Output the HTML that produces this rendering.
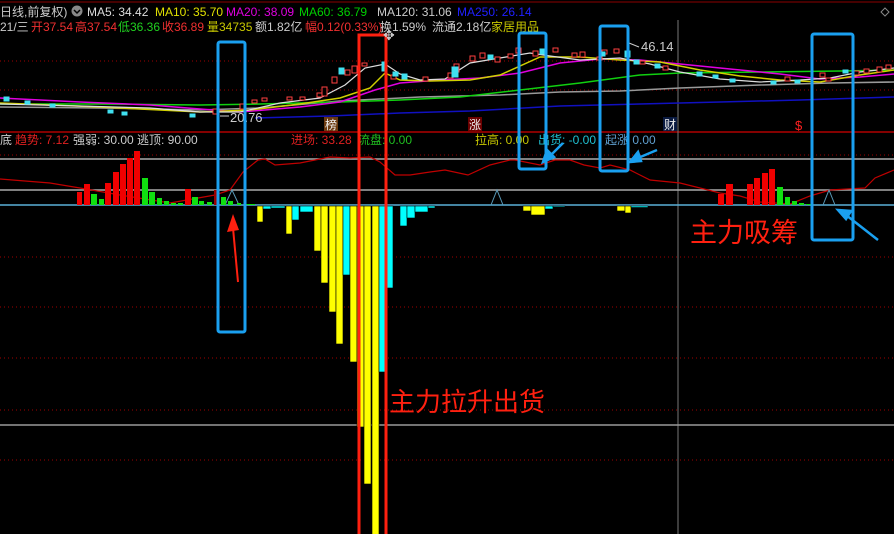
<!DOCTYPE html>
<html><head><meta charset="utf-8"><style>
html,body{margin:0;padding:0;background:#000;width:894px;height:534px;overflow:hidden}
svg{display:block}
text{font-family:"Liberation Sans","Noto Sans CJK SC",sans-serif;font-size:12px}
</style></head><body>
<svg width="894" height="534" viewBox="0 0 894 534">
<rect width="894" height="534" fill="#000"/>
<line x1="0" y1="2" x2="894" y2="2" stroke="#8b0000" stroke-width="1"/>
<g stroke="#a00000" stroke-dasharray="1,3" stroke-width="1">
<line x1="0" y1="61" x2="894" y2="61"/><line x1="0" y1="90" x2="894" y2="90"/>
<line x1="0" y1="155" x2="894" y2="155"/><line x1="0" y1="257" x2="894" y2="257"/>
<line x1="0" y1="307" x2="894" y2="307"/><line x1="0" y1="358" x2="894" y2="358"/>
<line x1="0" y1="410" x2="894" y2="410"/><line x1="0" y1="460" x2="894" y2="460"/>
</g>
<line x1="0" y1="132" x2="894" y2="132" stroke="#b00000" stroke-width="1.5"/>
<line x1="678" y1="20" x2="678" y2="534" stroke="#777" stroke-width="1"/>
<line x1="0" y1="159" x2="894" y2="159" stroke="#aaa" stroke-width="1.5"/>
<line x1="0" y1="190" x2="894" y2="190" stroke="#aaa" stroke-width="1.5"/>
<line x1="0" y1="425" x2="894" y2="425" stroke="#999" stroke-width="1.5"/>
<line x1="0" y1="205" x2="894" y2="205" stroke="#5ab0d8" stroke-width="1.5"/>

<g style="font-size:12px">
<text x="-4" y="16" fill="#ccc">(日线,前复权)</text>
<text x="87" y="16" fill="#ddd">MA5: 34.42</text>
<text x="155" y="16" fill="#e0e000">MA10: 35.70</text>
<text x="226" y="16" fill="#e000e0">MA20: 38.09</text>
<text x="299" y="16" fill="#00d000">MA60: 36.79</text>
<text x="377" y="16" fill="#ccc">MA120: 31.06</text>
<text x="457" y="16" fill="#2020ff">MA250: 26.14</text>
<text x="0" y="31" fill="#ccc">21/三</text>
<text x="31" y="31" fill="#f03030">开37.54</text>
<text x="75" y="31" fill="#f03030">高37.54</text>
<text x="118" y="31" fill="#20d020">低36.36</text>
<text x="162" y="31" fill="#f03030">收36.89</text>
<text x="207" y="31" fill="#c8c800">量34735</text>
<text x="255" y="31" fill="#ccc">额1.82亿</text>
<text x="305" y="31" fill="#f03030">幅0.12(0.33%)</text>
<text x="380" y="31" fill="#ccc">换1.59%</text>
<text x="432" y="31" fill="#ccc">流通2.18亿</text>
<text x="491" y="31" fill="#c8c800">家居用品</text>
</g>
<circle cx="77" cy="11" r="5.5" fill="#888"/><path d="M74 10 L77 13 L80 10" stroke="#000" stroke-width="1.5" fill="none"/>
<path d="M885 8 L889 12 L885 16 L881 12Z" stroke="#888" fill="none"/>

<polyline fill="none" stroke="#1010c0" stroke-width="1.5" points="255,118 330,116 400,113 470,111 560,106 640,104 720,102 800,100 894,97"/>
<polyline fill="none" stroke="#999" stroke-width="1.5" points="0,107 100,108 200,110 260,108 340,101 420,97 500,95 560,92 620,91 680,88 760,85 830,83 894,82"/>
<polyline fill="none" stroke="#10d010" stroke-width="1.5" points="0,104 100,104 200,105 260,104 340,102 400,100 460,97 520,90 580,83 640,75 680,73 760,72 840,71 894,70"/>
<polyline fill="none" stroke="#e000e0" stroke-width="1.5" points="0,98 80,102 150,105 200,109 240,112 300,107 340,102 375,90 400,83 440,80 480,78 520,73 560,63 600,59 640,60 680,64 730,69 780,74 820,79 860,77 894,74"/>
<polyline fill="none" stroke="#d0d000" stroke-width="1.5" points="0,103 100,107 200,112 250,110 300,104 340,98 370,88 385,73 400,80 430,81 470,80 500,75 540,57 580,57 620,60 660,62 700,70 740,76 780,80 820,82 860,75 894,70"/>
<polyline fill="none" stroke="#ddd" stroke-width="1.2" points="0,104 80,106 150,108 200,112 240,112 280,103 320,98 345,85 365,68 385,64 400,74 420,80 445,79 470,63 500,58 530,53 550,56 580,60 620,58 650,64 680,72 720,79 760,82 800,80 830,78 860,72 894,68"/>
<g stroke-width="1">
<g fill="#000" stroke="#ff4040">
<rect x="213" y="109" width="5" height="5"/><rect x="240" y="104" width="5" height="5"/><rect x="252" y="100" width="5" height="3"/><rect x="262" y="98" width="5" height="3"/>
<rect x="287" y="97" width="5" height="3"/><rect x="300" y="97" width="5" height="3"/><rect x="317" y="93" width="5" height="4"/><rect x="322" y="87" width="5" height="9"/>
<rect x="332" y="77" width="5" height="6"/><rect x="345" y="70" width="5" height="5"/><rect x="352" y="66" width="5" height="7"/><rect x="362" y="63" width="5" height="3"/>
<rect x="391" y="75" width="5" height="4"/><rect x="423" y="77" width="5" height="4"/><rect x="448" y="73" width="5" height="5"/><rect x="454" y="64" width="5" height="8"/>
<rect x="470" y="56" width="5" height="5"/><rect x="480" y="53" width="5" height="5"/><rect x="495" y="57" width="5" height="5"/><rect x="508" y="54" width="5" height="4"/>
<rect x="516" y="48" width="5" height="5"/><rect x="533" y="51" width="5" height="5"/><rect x="553" y="48" width="5" height="4"/><rect x="572" y="53" width="5" height="4"/>
<rect x="580" y="52" width="5" height="5"/><rect x="597" y="57" width="5" height="3"/><rect x="602" y="50" width="5" height="4"/><rect x="614" y="49" width="5" height="4"/>
<rect x="640" y="61" width="5" height="3"/><rect x="663" y="66" width="5" height="4"/><rect x="785" y="77" width="5" height="4"/><rect x="820" y="73" width="5" height="4"/>
<rect x="826" y="78" width="5" height="3"/><rect x="854" y="71" width="5" height="4"/><rect x="864" y="69" width="5" height="4"/><rect x="877" y="67" width="5" height="5"/><rect x="886" y="65" width="5" height="4"/>
</g>
<g fill="#40e0f0" stroke="#40e0f0">
<rect x="4" y="97" width="5" height="4"/><rect x="25" y="101" width="5" height="3"/><rect x="50" y="104" width="5" height="3"/><rect x="108" y="110" width="5" height="3"/>
<rect x="122" y="112" width="5" height="3"/><rect x="190" y="114" width="5" height="3"/><rect x="339" y="68" width="5" height="6"/><rect x="382" y="62" width="5" height="9"/>
<rect x="393" y="72" width="5" height="4"/><rect x="402" y="74" width="5" height="5"/>
<rect x="452" y="67" width="6" height="10"/><rect x="488" y="55" width="5" height="4"/><rect x="540" y="49" width="5" height="5"/>
<rect x="600" y="52" width="5" height="4"/><rect x="625" y="51" width="5" height="6"/><rect x="634" y="60" width="5" height="4"/><rect x="655" y="64" width="5" height="4"/>
<rect x="697" y="72" width="5" height="4"/><rect x="713" y="75" width="5" height="3"/><rect x="730" y="79" width="5" height="3"/><rect x="771" y="81" width="5" height="3"/>
<rect x="795" y="80" width="5" height="3"/><rect x="843" y="70" width="5" height="3"/>
</g>
</g>
<text x="230" y="122" fill="#ccc" style="font-size:13px">20.76</text>
<line x1="220" y1="116" x2="229" y2="116" stroke="#ccc"/>
<text x="641" y="51" fill="#ccc" style="font-size:13px">46.14</text>
<line x1="629" y1="43" x2="639" y2="47" stroke="#ccc"/>
<rect x="324" y="117" width="14" height="14" fill="#6b3a10"/><text x="325" y="129" fill="#eee">榜</text>
<rect x="468" y="117" width="14" height="14" fill="#6a0000"/><text x="469" y="129" fill="#eee">涨</text>
<rect x="663" y="117" width="14" height="14" fill="#0a1a40"/><text x="664" y="129" fill="#eee">财</text>
<text x="795" y="130" fill="#ff2020" style="font-size:13px">$</text>

<g style="font-size:12px">
<text x="0" y="144" fill="#ccc">底</text>
<text x="15" y="144" fill="#e02020">趋势: 7.12</text>
<text x="73" y="144" fill="#ccc">强弱: 30.00</text>
<text x="137" y="144" fill="#ccc">逃顶: 90.00</text>
<text x="291" y="144" fill="#e02020">进场: 33.28</text>
<text x="358" y="144" fill="#20c020">流盘: 0.00</text>
<text x="475" y="144" fill="#c8c800">拉高: 0.00</text>
<text x="538" y="144" fill="#20c0d0">出货: -0.00</text>
<text x="605" y="144" fill="#60a0d0">起涨 0.00</text>
</g>

<polyline fill="none" stroke="#c00000" stroke-width="1.2" points="0,179 50,183 80,188 120,195 170,203 215,195 230,190 243,172 258,160 265,159 275,165 300,163 330,157 350,158 370,157 380,162 395,175 410,175 430,172 445,170 468,175 490,165 510,160 515,160 540,165 555,160 570,160 584,165 600,168 610,165 630,170 650,180 680,183 720,193 740,196 760,202 790,204 810,196 830,190 865,188 875,178 894,170"/>
<g fill="none" stroke="#5a9ab8"><path d="M225 205 L232 190 L239 205"/><path d="M491 205 L497 190 L503 205"/><path d="M823 205 L829 190 L835 205"/></g>
<g fill="#f00000">
<rect x="77" y="192" width="5" height="13"/><rect x="84" y="184" width="6" height="21"/><rect x="105" y="183" width="6" height="22"/><rect x="113" y="172" width="6" height="33"/>
<rect x="120" y="164" width="6" height="41"/><rect x="127" y="158" width="6" height="47"/><rect x="134" y="151" width="6" height="54"/><rect x="185" y="189" width="6" height="16"/>
<rect x="214" y="190" width="4" height="15" fill="#900"/>
<rect x="718" y="194" width="6" height="11"/><rect x="726" y="184" width="7" height="21"/><rect x="747" y="184" width="6" height="21"/><rect x="754" y="178" width="6" height="27"/>
<rect x="762" y="173" width="6" height="32"/><rect x="769" y="169" width="6" height="36"/>
</g>
<g fill="#10e010">
<rect x="91" y="194" width="6" height="11"/><rect x="99" y="199" width="5" height="6"/><rect x="142" y="178" width="6" height="27"/><rect x="149" y="192" width="6" height="13"/>
<rect x="157" y="198" width="5" height="7"/><rect x="164" y="201" width="5" height="4"/><rect x="171" y="203" width="5" height="2"/><rect x="178" y="203" width="5" height="2"/>
<rect x="192" y="197" width="6" height="8"/><rect x="199" y="201" width="5" height="4"/><rect x="207" y="202" width="5" height="3"/><rect x="221" y="197" width="5" height="8"/>
<rect x="228" y="201" width="5" height="4"/><rect x="237" y="203" width="4" height="2"/><rect x="244" y="204" width="11" height="1"/>
<rect x="777" y="187" width="6" height="18"/><rect x="785" y="197" width="5" height="8"/><rect x="792" y="201" width="5" height="4"/><rect x="799" y="203" width="5" height="2"/><rect x="806" y="204" width="7" height="1"/>
</g>
<g stroke="#000" stroke-width="0.6">
<rect x="257" y="206" width="6" height="16" fill="#ffff00"/><rect x="263" y="206" width="8" height="3" fill="#00ffff"/><rect x="271" y="206" width="14" height="2" fill="#00ffff"/>
<rect x="286" y="206" width="6" height="28" fill="#ffff00"/><rect x="292" y="206" width="7" height="14" fill="#00ffff"/><rect x="300" y="206" width="13" height="6" fill="#00ffff"/>
<rect x="314" y="206" width="7" height="45" fill="#ffff00"/><rect x="321" y="206" width="7" height="77" fill="#ffff00"/><rect x="329" y="206" width="7" height="106" fill="#ffff00"/>
<rect x="336" y="206" width="7" height="138" fill="#ffff00"/><rect x="343" y="206" width="7" height="69" fill="#00ffff"/><rect x="350" y="206" width="7" height="156" fill="#ffff00"/>
<rect x="357" y="206" width="7" height="221" fill="#ffff00"/><rect x="364" y="206" width="7" height="278" fill="#ffff00"/><rect x="372" y="206" width="7" height="330" fill="#ffff00"/>
<rect x="379" y="206" width="6" height="166" fill="#00ffff"/><rect x="386" y="206" width="7" height="82" fill="#00ffff"/><rect x="400" y="206" width="7" height="20" fill="#00ffff"/>
<rect x="407" y="206" width="8" height="12" fill="#00ffff"/><rect x="415" y="206" width="13" height="6" fill="#00ffff"/><rect x="428" y="206" width="7" height="2" fill="#00ffff"/>
<rect x="523" y="206" width="8" height="5" fill="#ffff00"/><rect x="531" y="206" width="14" height="9" fill="#ffff00"/><rect x="545" y="206" width="8" height="3" fill="#00ffff"/><rect x="553" y="206" width="12" height="1" fill="#00ffff"/>
<rect x="617" y="206" width="8" height="5" fill="#ffff00"/><rect x="625" y="206" width="6" height="7" fill="#ffff00"/><rect x="631" y="206" width="17" height="1.5" fill="#00ffff"/>
</g>

<g fill="none" stroke="#1aa0f0" stroke-width="3">
<rect x="218" y="42" width="27" height="290" rx="2"/>
<rect x="519" y="33" width="27" height="136" rx="2"/>
<rect x="600" y="26" width="28" height="145" rx="2"/>
<rect x="812" y="34" width="41" height="206" rx="2"/>
</g>
<rect x="359" y="35" width="27" height="505" fill="none" stroke="#ff2010" stroke-width="3"/>
<text x="383" y="40" fill="#ccc" style="font-size:14px">✥</text>
<path d="M238 282 L233 228" stroke="#ff2010" stroke-width="2"/><path d="M227 232 L233 214 L239 230Z" fill="#ff2010"/>
<g stroke="#1aa0f0" stroke-width="2.5" fill="#1aa0f0">
<line x1="563" y1="143" x2="550" y2="156"/><path d="M543 162 L547 150 L554 157Z"/>
<line x1="657" y1="150" x2="638" y2="158"/><path d="M630 162 L638 152 L641 161Z"/>
<line x1="878" y1="240" x2="846" y2="215"/><path d="M838 210 L851 211 L846 219Z"/>
</g>
<text x="389" y="411" fill="#ff2010" style="font-size:26px;font-family:'Noto Sans CJK SC',sans-serif">主力拉升出货</text>
<text x="690" y="242" fill="#ff2010" style="font-size:27px;font-family:'Noto Sans CJK SC',sans-serif">主力吸筹</text>
</svg>
</body></html>
